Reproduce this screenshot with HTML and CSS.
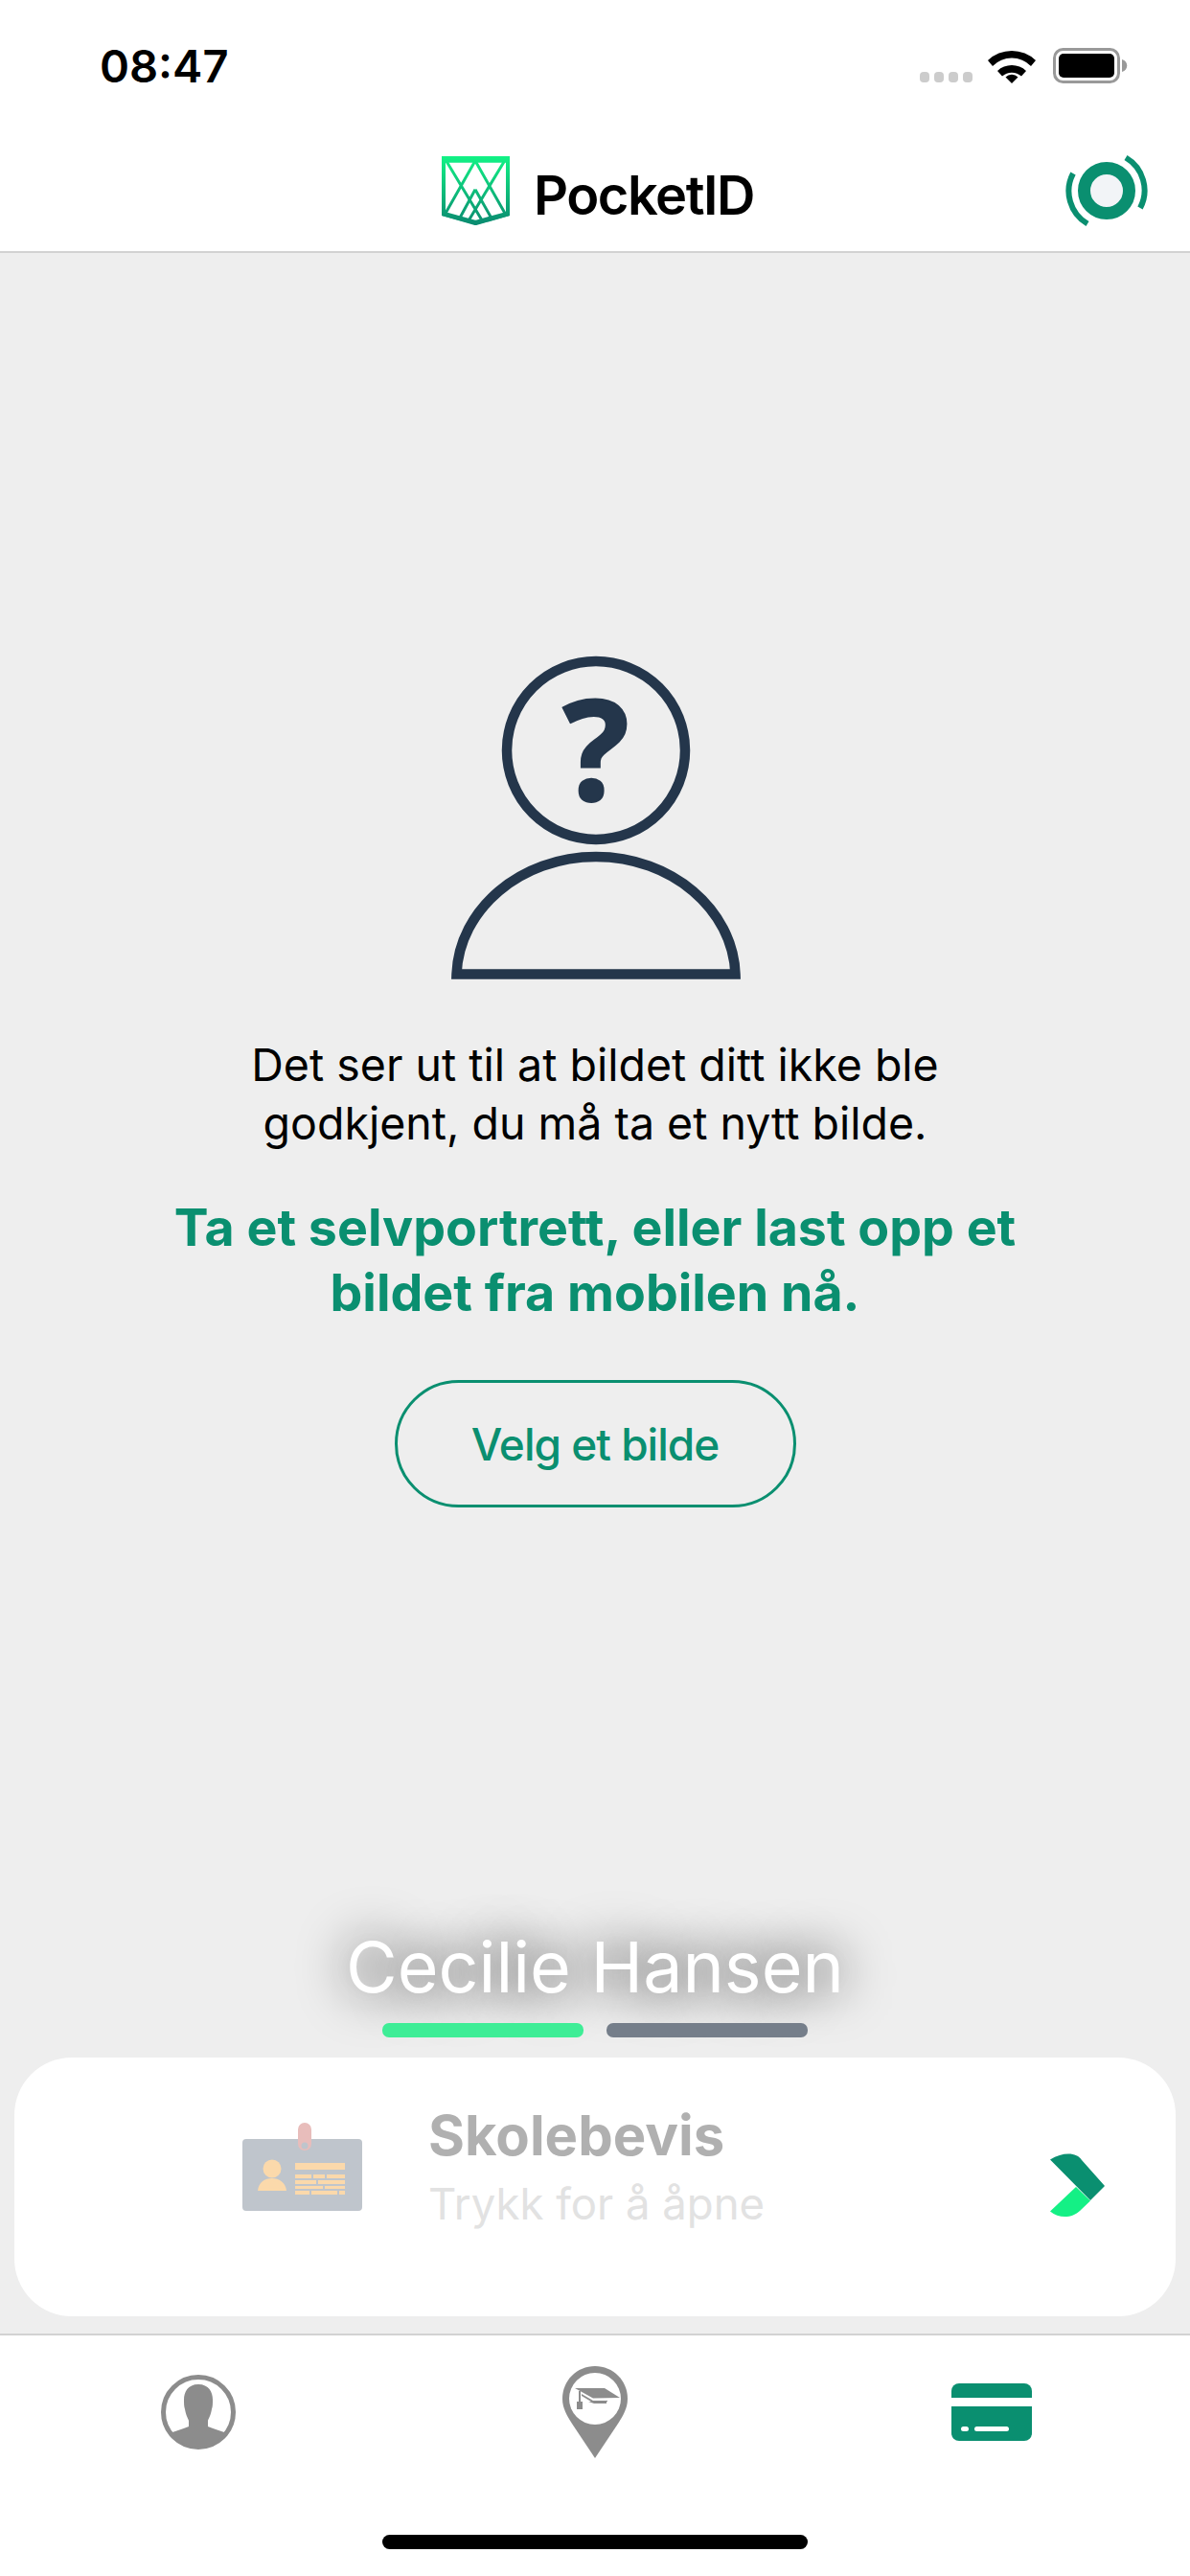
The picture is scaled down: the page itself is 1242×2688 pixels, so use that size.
FILE: index.html
```html
<!DOCTYPE html>
<html lang="nb">
<head>
    <meta charset="UTF-8">
    <title>PocketID</title>
    <link rel="stylesheet" href="styles.css">
</head>
<body>
    <header class="top">
        <div class="status-bar">
            <span class="time">08:47</span>
            <div class="status-icons">
                <svg class="signal" width="55" height="12" viewBox="0 0 55 12">
                    <rect x="0" y="0" width="10" height="11" rx="4" fill="#ccc"/>
                    <rect x="15" y="0" width="10" height="11" rx="4" fill="#ccc"/>
                    <rect x="30" y="0" width="10" height="11" rx="4" fill="#ccc"/>
                    <rect x="45" y="0" width="10" height="11" rx="4" fill="#ccc"/>
                </svg>
                <svg class="wifi" width="50" height="37" viewBox="0 0 50 37">
                    <path d="M0 13 A36 36 0 0 1 50 13 L45 19 A28 28 0 0 0 5 19 Z"/>
                    <path d="M10 24 A22 22 0 0 1 40 24 L35 29.500 A15 15 0 0 0 15 29.500 Z"/>
                    <path d="M25 37 L18.500 30.500 A9 9 0 0 1 31.500 30.500 Z"/>
                </svg>
                <svg class="battery" width="78" height="37" viewBox="0 0 78 37">
                    <rect x="1.500" y="1.500" width="67" height="34" rx="9" fill="none" stroke="#999" stroke-width="3"/>
                    <rect x="6" y="6" width="58" height="25" rx="5"/>
                    <path d="M72 12 C79 14 79 23 72 25 Z" fill="#999"/>
                </svg>
            </div>
        </div>
        <nav class="nav-row">
            <div class="nav-side"></div>
            <div class="brand">
                <svg class="brand-logo" width="71" height="72" viewBox="0 0 213 215">
                    <defs>
                        <linearGradient id="logoGrad" gradientUnits="userSpaceOnUse" x1="0" y1="0" x2="0" y2="215">
                            <stop offset="0" stop-color="#12f285"/>
                            <stop offset="1" stop-color="#0a8a70"/>
                        </linearGradient>
                    </defs>
                    <g fill="none" stroke="url(#logoGrad)" stroke-width="9">
                        <path d="M6 14 H207 V181 L106 210 L6 181 Z" stroke-width="12"/>
                        <path d="M0 6 H213" stroke-width="13"/>
                        <path d="M14 14 L125 198 M105 14 L12 178 M105 14 L198 178 M197 14 L86 198"/>
                        <path d="M105 104 L57 192 M105 104 L155 192"/>
                        <path d="M0 178 L106 207 L213 178" stroke-width="14"/>
                    </g>
                </svg>
                <span class="brand-name">PocketID</span>
            </div>
            <div class="nav-side nav-side-right">
                <svg class="sync" width="86" height="86" viewBox="0 0 86 86">
                    <circle cx="43" cy="43" r="23.500" fill="#f2f4f7" stroke="#0a8f70" stroke-width="13"/>
                    <path d="M63 8.500 A39.500 39.500 0 0 1 78 61" fill="none" stroke="#0a8f70" stroke-width="6"/>
                    <path d="M23 77.500 A39.500 39.500 0 0 1 8 25" fill="none" stroke="#0a8f70" stroke-width="6"/>
                </svg>
            </div>
        </nav>
    </header>

    <main class="content">
        <div class="person">
            <svg width="302" height="340" viewBox="0 0 302 340">
                <circle cx="151" cy="99" r="93" fill="none" stroke="#24364b" stroke-width="10.500"/>
                <path d="M5.500 332.500 C8 265 72 210 151 210 C230 210 294 265 296.500 332.500 Z" fill="none" stroke="#24364b" stroke-width="10.500"/>
            </svg>
            <span class="person-mark">?</span>
        </div>

        <p class="message">Det ser ut til at bildet ditt ikke ble<br>godkjent, du må ta et nytt bilde.</p>
        <p class="prompt">Ta et selvportrett, eller last opp et<br>bildet fra mobilen nå.</p>
        <button class="pick-button">Velg et bilde</button>

        <div class="owner">
            <h2 class="owner-name">Cecilie Hansen</h2>
            <div class="pager">
                <span class="pager-bar active"></span>
                <span class="pager-bar"></span>
            </div>
        </div>

        <div class="card">
            <svg class="card-icon" width="125" height="92" viewBox="0 0 125 92">
                <rect x="0" y="17" width="125" height="75" rx="4" fill="#bfc5cc"/>
                <rect x="58" y="0" width="14" height="29" rx="7" fill="#e8bdbb"/>
                <circle cx="65" cy="24" r="3.500" fill="#bfc5cc"/>
                <circle cx="31" cy="48" r="9.500" fill="#fbd9ab"/>
                <path d="M16 71 C17 62 23 58 31 58 C38 58 45 62 46 71 Z" fill="#fbd9ab"/>
                <rect x="55" y="42" width="52" height="7" fill="#fbd9ab"/>
                <g fill="#fbd9ab">
                    <rect x="55" y="54" width="17" height="4"/><rect x="74" y="54" width="12" height="4"/><rect x="88" y="54" width="19" height="4"/>
                    <rect x="55" y="60" width="22" height="4"/><rect x="79" y="60" width="28" height="4"/>
                    <rect x="55" y="66" width="29" height="3"/><rect x="86" y="66" width="21" height="3"/>
                    <rect x="55" y="71" width="15" height="4"/><rect x="72" y="71" width="27" height="4"/><rect x="101" y="71" width="6" height="4"/>
                </g>
            </svg>
            <div class="card-text">
                <h3 class="card-title">Skolebevis</h3>
                <p class="card-hint">Trykk for å åpne</p>
            </div>
            <svg class="card-arrow" width="57" height="67" viewBox="0 0 57 67">
                <path d="M0 6.500 C14 -2 28 -1 33 7 L57 34 L42 49 Z" fill="#0a8f70"/>
                <path d="M27 35 L42 49.500 L31 60 C24 67 10 69 0 60.500 Z" fill="#14f085"/>
            </svg>
        </div>
    </main>

    <footer class="tabbar">
        <div class="tabs">
            <svg class="tab-icon" width="78" height="78" viewBox="0 0 78 78">
                <defs>
                    <clipPath id="avatarClip"><circle cx="39" cy="39" r="36"/></clipPath>
                </defs>
                <circle cx="39" cy="39" r="36.500" fill="#fff" stroke="#8c8c8c" stroke-width="5"/>
                <path clip-path="url(#avatarClip)" d="M39 10 C50 10 54 18 54 26 C54 30 54 33 53 36 C52 42 50 45 49 48 L49 54 C54 56 60 58 66 60 L66 80 L12 80 L12 60 C18 58 24 56 29 54 L29 48 C28 45 26 42 25 36 C24 33 24 30 24 26 C24 18 28 10 39 10 Z" fill="#8c8c8c"/>
            </svg>
            <svg class="tab-icon" width="68" height="96" viewBox="0 0 68 96">
                <path d="M34 0 C53 0 68 15 68 34 C68 44 63 52 58 60 L34 96 L10 60 C5 52 0 44 0 34 C0 15 15 0 34 0 Z" fill="#8c8c8c"/>
                <circle cx="34" cy="34" r="27" fill="#fff"/>
                <path d="M13 23 H44 L60 33 L32 33.500 Z" fill="#8c8c8c"/>
                <path d="M20 29 L32 36 H47 V37 H30 L20 31 Z" fill="#8c8c8c"/>
                <path d="M27 37 L33 39 H46 V37 Z" fill="#8c8c8c"/>
                <path d="M17 26 H19 V37 H17 Z" fill="#8c8c8c"/>
                <rect x="15" y="37" width="6" height="8" fill="#8c8c8c"/>
            </svg>
            <svg class="tab-icon" width="84" height="60" viewBox="0 0 84 60">
                <path d="M8 0 H76 A8 8 0 0 1 84 8 V15 H0 V8 A8 8 0 0 1 8 0 Z" fill="#0a8f70"/>
                <path d="M0 24 H84 V52 A8 8 0 0 1 76 60 H8 A8 8 0 0 1 0 52 Z" fill="#0a8f70"/>
                <rect x="10" y="45" width="8" height="5" rx="2.500" fill="#fff"/>
                <rect x="24" y="45" width="36" height="5" rx="2.500" fill="#fff"/>
            </svg>
        </div>
        <div class="home-indicator"></div>
    </footer>
</body>
</html>
```
FILE: styles.css
```css
* {
    margin: 0;
    padding: 0;
    box-sizing: border-box;
    font-family: Inter, "Liberation Sans", sans-serif;
}
body {
    display: flex;
    flex-direction: column;
    width: 1242px;
    height: 2688px;
    overflow: hidden;
    background-color: #fff;
}

/* status bar + logo row */
.top {
    height: 264px;
    border-bottom: 2px solid #d2d2d2;
    background-color: #fff;
}
.status-bar {
    display: flex;
    justify-content: space-between;
    align-items: center;
    height: 136px;
    padding: 0 65px 0 104px;
}
.time {
    font-size: 47px;
    font-weight: 600;
    color: #000;
}
.status-icons {
    display: flex;
    align-items: center;
    gap: 18px;
}
.signal {
    margin-top: 26px;
    margin-right: -2px;
}
.nav-row {
    display: grid;
    grid-template-columns: 1fr auto 1fr;
    align-items: center;
    height: 126px;
}
.nav-side-right {
    display: flex;
    justify-content: flex-end;
    padding-right: 44px;
}
.brand {
    display: flex;
    align-items: center;
    gap: 25px;
    margin-left: 6px;
}
.brand-name {
    margin-top: 10px;
    font-size: 56px;
    font-weight: 600;
    letter-spacing: -1.500px;
    color: #000;
}

/* main grey area */
.content {
    flex: 1;
    display: flex;
    flex-direction: column;
    align-items: center;
    padding: 420px 15px 18px;
    background-color: #eee;
}
.person {
    position: relative;
    width: 302px;
    height: 340px;
    margin-left: 2px;
}
.person-mark {
    position: absolute;
    top: 22px;
    left: 0;
    width: 100%;
    font-family: "Open Sans", sans-serif;
    font-size: 146px;
    font-weight: 700;
    line-height: 1;
    text-align: center;
    color: #24364b;
    -webkit-text-stroke: 2px #24364b;
}
.message {
    margin-top: 57px;
    font-size: 46.500px;
    line-height: 61px;
    text-align: center;
    color: #000;
}
.prompt {
    margin-top: 44px;
    font-size: 53.700px;
    font-weight: 700;
    line-height: 68px;
    text-align: center;
    color: #0a8f70;
}
.pick-button {
    width: 419px;
    height: 133px;
    margin-top: 57px;
    border: 3px solid #0a8f70;
    border-radius: 67px;
    background: none;
    font-size: 46px;
    font-weight: 500;
    letter-spacing: -1px;
    color: #0a8f70;
}
.owner {
    display: flex;
    flex-direction: column;
    align-items: center;
    margin-top: auto;
}
.owner-name {
    font-size: 73.500px;
    font-weight: 400;
    line-height: 88px;
    margin-bottom: 3px;
    color: #fff;
    text-shadow: 0 0 52px rgba(0, 0, 0, 0.65), 0 0 52px rgba(0, 0, 0, 0.35);
}
.pager {
    display: flex;
    gap: 24px;
    margin-top: 11px;
}
.pager-bar {
    width: 210px;
    height: 15px;
    border-radius: 7px;
    background-color: #757e8a;
}
.pager-bar.active {
    background-color: #3eed96;
}
.card {
    display: flex;
    align-items: flex-start;
    width: 1212px;
    height: 270px;
    margin-top: 21px;
    padding: 0 74px 0 238px;
    border-radius: 60px;
    background-color: #fff;
}
.card-icon {
    margin-top: 68px;
}
.card-text {
    flex: 1;
    margin-left: 69px;
    margin-top: 45px;
}
.card-title {
    font-size: 58px;
    font-weight: 700;
    line-height: 72px;
    color: #b0b0b0;
}
.card-hint {
    margin-top: 7px;
    font-size: 45.500px;
    line-height: 58px;
    color: #e2e2e2;
}
.card-arrow {
    margin-top: 100px;
}

/* bottom tabs */
.tabbar {
    display: flex;
    flex-direction: column;
    height: 253px;
    border-top: 2px solid #d2d2d2;
    background-color: #fff;
}
.tabs {
    display: grid;
    grid-template-columns: repeat(3, 1fr);
    justify-items: center;
    align-items: center;
    height: 160px;
}
.home-indicator {
    width: 444px;
    height: 15px;
    margin: 48px auto 0;
    border-radius: 8px;
    background-color: #000;
}
```
